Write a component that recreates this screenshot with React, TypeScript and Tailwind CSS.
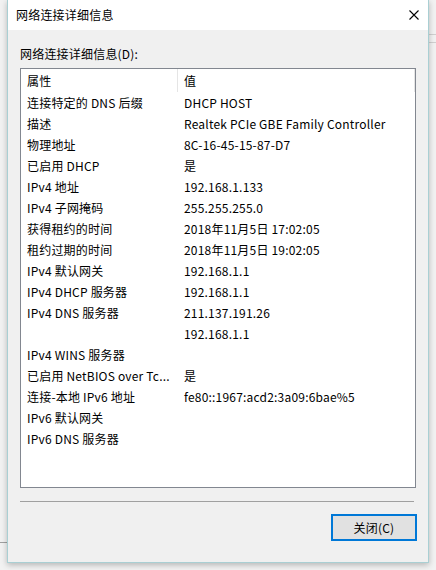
import React from "react";

const rows: [string, string][] = [
  ["连接特定的 DNS 后缀", "DHCP HOST"],
  ["描述", "Realtek PCIe GBE Family Controller"],
  ["物理地址", "8C-16-45-15-87-D7"],
  ["已启用 DHCP", "是"],
  ["IPv4 地址", "192.168.1.133"],
  ["IPv4 子网掩码", "255.255.255.0"],
  ["获得租约的时间", "2018年11月5日 17:02:05"],
  ["租约过期的时间", "2018年11月5日 19:02:05"],
  ["IPv4 默认网关", "192.168.1.1"],
  ["IPv4 DHCP 服务器", "192.168.1.1"],
  ["IPv4 DNS 服务器", "211.137.191.26"],
  ["", "192.168.1.1"],
  ["IPv4 WINS 服务器", ""],
  ["已启用 NetBIOS over Tc...", "是"],
  ["连接-本地 IPv6 地址", "fe80::1967:acd2:3a09:6bae%5"],
  ["IPv6 默认网关", ""],
  ["IPv6 DNS 服务器", ""],
];

export default function App() {
  return (
    <div
      className="relative w-[436px] h-[570px] bg-[#f2f2f2] overflow-hidden text-[12px] tracking-[0.2px] text-black"
      style={{ fontFamily: '"Noto Sans CJK SC", "Liberation Sans", sans-serif' }}
    >
      {/* bits of the windows behind */}
      <div className="absolute left-0 top-[542px] w-[7px] h-px bg-[#a0a0a0]" />
      <div className="absolute right-0 top-[34px] w-[8px] h-px bg-[#d0d0d0]" />
      <div className="absolute right-0 top-[42px] w-[8px] h-px bg-[#d0d0d0]" />

      {/* Dialog */}
      <div className="absolute left-[7px] top-0 w-[422px] h-[563px] border border-t-0 border-[#a9cfd3] bg-[#f0f0f0] flex flex-col shadow-[0_2px_6px_rgba(0,0,0,0.25)]">
        {/* Title bar */}
        <div className="h-[30px] bg-white flex items-center justify-between pl-[8px] pr-[9px] shrink-0">
          <span className="leading-[16px]">网络连接详细信息</span>
          <svg width="10" height="10" viewBox="0 0 10 10" className="block">
            <path d="M0.5 0.5 L9.5 9.5 M9.5 0.5 L0.5 9.5" stroke="#000" strokeWidth="1.1" fill="none" />
          </svg>
        </div>

        {/* Body */}
        <div className="flex flex-col px-[12px] pt-[16px]">
          <div className="leading-[16px] h-[16px] mb-[6px]">网络连接详细信息(D):</div>

          <div className="w-[396px] h-[420px] border border-[#828790] bg-white flex flex-col">
            <div className="h-[23px] flex shrink-0">
              <div className="w-[157px] border-r border-[#e5e5e5] pl-[6px] flex items-center">属性</div>
              <div className="flex-1 border-r border-[#e5e5e5] pl-[6px] flex items-center">值</div>
            </div>
            {rows.map(([k, v], i) => (
              <div key={i} className="h-[21px] flex items-center shrink-0">
                <div className="w-[157px] pl-[6px] whitespace-nowrap overflow-hidden">{k}</div>
                <div className="flex-1 pl-[6px] whitespace-nowrap">{v}</div>
              </div>
            ))}
          </div>

          <div className="mt-[13px] w-[394px] h-px bg-[#a0a0a0]" />

          <div className="mt-[12px] flex justify-end">
            <button className="w-[86px] h-[27px] border-2 border-[#0078d7] bg-[#e1e1e1] flex items-center justify-center leading-[16px] mr-[-1px]">
              关闭(C)
            </button>
          </div>
        </div>
      </div>
    </div>
  );
}
